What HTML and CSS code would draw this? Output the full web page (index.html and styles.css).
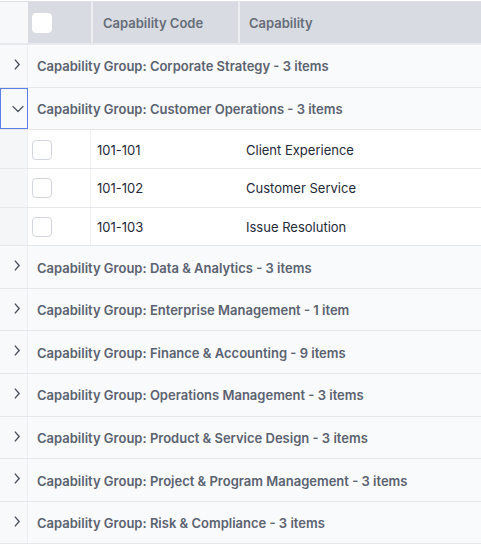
FILE: index.html
```html
<!DOCTYPE html>
<html lang="en">
<head>
  <meta charset="UTF-8">
  <title>Capabilities</title>
  <link rel="stylesheet" href="styles.css">
</head>
<body>
  <div class="grid">
    <!-- header -->
    <div class="row head">
      <div class="gutter"></div>
      <div class="cell col-check"><span class="box box-white"></span></div>
      <div class="cell col-code">Capability Code</div>
      <div class="cell col-name">Capability</div>
    </div>

    <div class="row group">
      <div class="gutter"><svg class="chev" viewBox="0 0 10 10"><path d="M3 1 L6.5 5 L3 9"/></svg></div>
      <div class="cell group-label">Capability Group: Corporate Strategy - 3 items</div>
    </div>

    <div class="row group open">
      <div class="gutter focus"><svg class="chev chev-down" viewBox="0 0 12 12"><path d="M1 3.5 L6 8.5 L11 3.5"/></svg></div>
      <div class="cell group-label">Capability Group: Customer Operations - 3 items</div>
    </div>

    <div class="row item">
      <div class="gutter"></div>
      <div class="cell col-check"><span class="box"></span></div>
      <div class="cell col-code">101-101</div>
      <div class="cell col-name">Client Experience</div>
    </div>
    <div class="row item">
      <div class="gutter"></div>
      <div class="cell col-check"><span class="box"></span></div>
      <div class="cell col-code">101-102</div>
      <div class="cell col-name">Customer Service</div>
    </div>
    <div class="row item">
      <div class="gutter"></div>
      <div class="cell col-check"><span class="box"></span></div>
      <div class="cell col-code">101-103</div>
      <div class="cell col-name">Issue Resolution</div>
    </div>

    <div class="row group">
      <div class="gutter"><svg class="chev" viewBox="0 0 10 10"><path d="M3 1 L6.5 5 L3 9"/></svg></div>
      <div class="cell group-label">Capability Group: Data &amp; Analytics - 3 items</div>
    </div>
    <div class="row group">
      <div class="gutter"><svg class="chev" viewBox="0 0 10 10"><path d="M3 1 L6.5 5 L3 9"/></svg></div>
      <div class="cell group-label">Capability Group: Enterprise Management - 1 item</div>
    </div>
    <div class="row group">
      <div class="gutter"><svg class="chev" viewBox="0 0 10 10"><path d="M3 1 L6.5 5 L3 9"/></svg></div>
      <div class="cell group-label">Capability Group: Finance &amp; Accounting - 9 items</div>
    </div>
    <div class="row group">
      <div class="gutter"><svg class="chev" viewBox="0 0 10 10"><path d="M3 1 L6.5 5 L3 9"/></svg></div>
      <div class="cell group-label">Capability Group: Operations Management - 3 items</div>
    </div>
    <div class="row group">
      <div class="gutter"><svg class="chev" viewBox="0 0 10 10"><path d="M3 1 L6.5 5 L3 9"/></svg></div>
      <div class="cell group-label">Capability Group: Product &amp; Service Design - 3 items</div>
    </div>
    <div class="row group">
      <div class="gutter"><svg class="chev" viewBox="0 0 10 10"><path d="M3 1 L6.5 5 L3 9"/></svg></div>
      <div class="cell group-label">Capability Group: Project &amp; Program Management - 3 items</div>
    </div>
    <div class="row group">
      <div class="gutter"><svg class="chev" viewBox="0 0 10 10"><path d="M3 1 L6.5 5 L3 9"/></svg></div>
      <div class="cell group-label">Capability Group: Risk &amp; Compliance - 3 items</div>
    </div>
  </div>
</body>
</html>
```

FILE: styles.css
```css
body {
  margin: 0;
  font-family: Inter, "Noto Sans", sans-serif;
  font-size: 13px;
  background-color: #fff;
  color: #1f2937;
}

.grid {
  border-top: 1px solid #dcdfe4;
  margin-top: 1px;
}

.row {
  display: flex;
  align-items: stretch;
  border-bottom: 1px solid #e5e7eb;
  box-sizing: border-box;
}

.gutter {
  width: 28px;
  flex: none;
  background-color: #f8f9fa;
  border-right: 1px solid #eceef1;
  box-sizing: border-box;
  display: flex;
  justify-content: flex-end;
  align-items: flex-start;
  padding-top: 14px;
  padding-right: 4px;
}

.gutter.focus {
  outline: 1.5px solid #5b7de8;
  outline-offset: -1.5px;
  padding-top: 15px;
  padding-right: 3px;
}

.cell {
  display: flex;
  align-items: center;
  box-sizing: border-box;
}

/* header */
.head {
  height: 43px;
  background-color: #d8dbe1;
  border-bottom: 2px solid #e7e9ed;
  color: #666c78;
  font-weight: 600;
}
.head .gutter {
  background-color: #f7f8fa;
  border-right: 1px solid #f7f8fa;
}
.col-check {
  width: 63px;
  padding-left: 4px;
  flex: none;
}
.col-code {
  width: 149px;
  flex: none;
  padding-left: 6px;
}
.head .col-code {
  padding-left: 10px;
  border-left: 2px solid #eceef1;
  border-right: 2px solid #eceef1;
}
.col-name {
  flex: 1;
  padding-left: 6px;
}
.head .col-name {
  padding-left: 9px;
}

.box {
  width: 18px;
  height: 18px;
  border: 1px solid #d2d6dc;
  border-radius: 4px;
  background-color: #fff;
}
.box-white {
  border-color: #fff;
}

/* group rows */
.group {
  height: 42.6px;
  background-color: #f9fafb;
}
.group-label {
  padding-left: 9px;
  padding-top: 1px;
  font-weight: 600;
  color: #5b6270;
}
.chev {
  width: 11px;
  height: 11px;
  fill: none;
  stroke: #4b5260;
  stroke-width: 1.3;
  stroke-linecap: round;
  stroke-linejoin: round;
}
.chev-down {
  width: 12px;
  height: 12px;
  stroke-width: 1.2;
}

/* item rows */
.item {
  height: 38.7px;
  background-color: #fff;
}
.item .gutter {
  background-color: #f5f6f8;
  border-right: 1px solid #eceef1;
}
.item .col-check {
  border-right: 1px solid #f0f1f3;
}
.item .cell {
  padding-top: 1px;
}
```
